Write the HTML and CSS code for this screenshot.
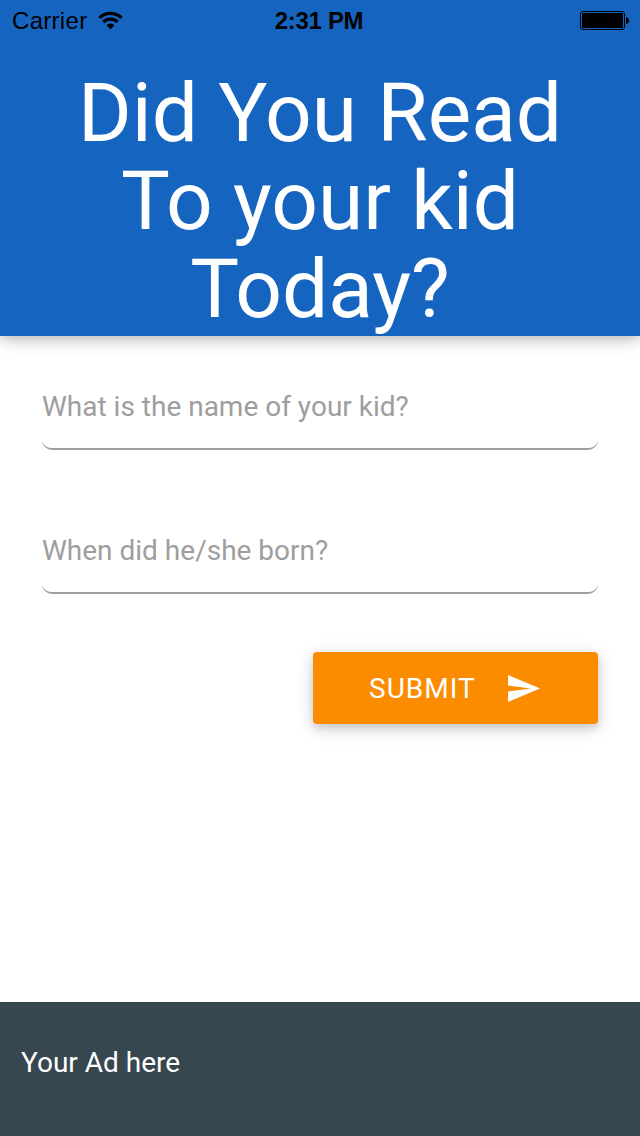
FILE: index.html
```html
<!DOCTYPE html>
<html lang="en">
<head>
<meta charset="utf-8">
<title>Did You Read</title>
<link rel="stylesheet" href="styles.css">
</head>
<body>
<div class="screen">
  <header class="header">
    <div class="status">
      <div class="status-left"><span class="carrier">Carrier</span>
        <svg class="wifi" width="25" height="19" viewBox="0 0 25 19" fill="none" stroke="#000" stroke-width="3.2"><path d="M1.4 6.8a16 16 0 0 1 22.2 0M5.4 11.1a10.2 10.2 0 0 1 14.2 0"/><path d="M12.5 18.3l-4-4.1a5.8 5.8 0 0 1 8 0z" fill="#000" stroke="none"/></svg>
      </div>
      <span class="time">2:31 PM</span>
      <svg class="battery" width="49" height="19" viewBox="0 0 49 19"><rect x=".5" y=".5" width="44" height="18" rx="2.5" fill="none" stroke="#000"/><rect x="2" y="2" width="41" height="15" rx="1"/><path d="M46 6q3 .5 3 3.5t-3 3.5z"/></svg>
    </div>
    <h1 class="title">Did You Read<br>To your kid<br>Today?</h1>
  </header>
  <main class="form">
    <div class="field">What is the name of your kid?</div>
    <div class="field">When did he/she born?</div>
    <button class="submit"><span>SUBMIT</span><svg width="32" height="27" viewBox="0 0 32 27"><path fill="#fff" d="M0 0l32 13.5L0 27V16.5l23-3L0 10.5z"/></svg></button>
  </main>
  <footer class="ad">Your Ad here</footer>
</div>
</body>
</html>
```
FILE: styles.css
```css
* { box-sizing: border-box; }
body { margin: 0; font-family: Roboto, sans-serif; }
.screen { width: 640px; height: 1136px; display: flex; flex-direction: column; background: #fff; }
.header { height: 336px; background: #1565c0; box-shadow: 0 4px 10px rgba(0,0,0,.16), 0 4px 20px rgba(0,0,0,.12); }
.status { height: 41px; padding: 1px 11px 0 12px; display: grid; grid-template-columns: 1fr auto 1fr; align-items: center; font: 24px/40px "Liberation Sans", sans-serif; color: #000; }
.status-left { display: flex; align-items: center; gap: 11px; }
.carrier { letter-spacing: .3px; }
.wifi { margin-top: -1px; }
.time { font-weight: 700; letter-spacing: -.3px; margin-right: 3px; }
.battery { justify-self: end; margin-top: -1px; }
.title { margin: 28px 0 0; text-align: center; color: #fff; font-size: 82px; line-height: 88px; font-weight: 400; }
.form { flex: 1; padding: 26px 42px 0; display: flex; flex-direction: column; }
.field { height: 88px; margin-bottom: 56px; border-bottom: 2px solid #9e9e9e; border-radius: 10px; line-height: 90px; font-size: 28px; color: #9e9e9e; }
.submit { width: 285px; height: 72px; margin-top: 2px; align-self: flex-end; border: 0; border-radius: 4px; background: #fb8c00; color: #fff; font: 28px Roboto, sans-serif; letter-spacing: 1px; padding: 0 58px 0 56px; display: flex; align-items: center; justify-content: space-between; box-shadow: 0 4px 10px rgba(0,0,0,.16), 0 4px 20px rgba(0,0,0,.12); }
.ad { height: 134px; padding: 0 21px; background: #37474f; color: #fff; font-size: 28px; line-height: 122px; }
```
